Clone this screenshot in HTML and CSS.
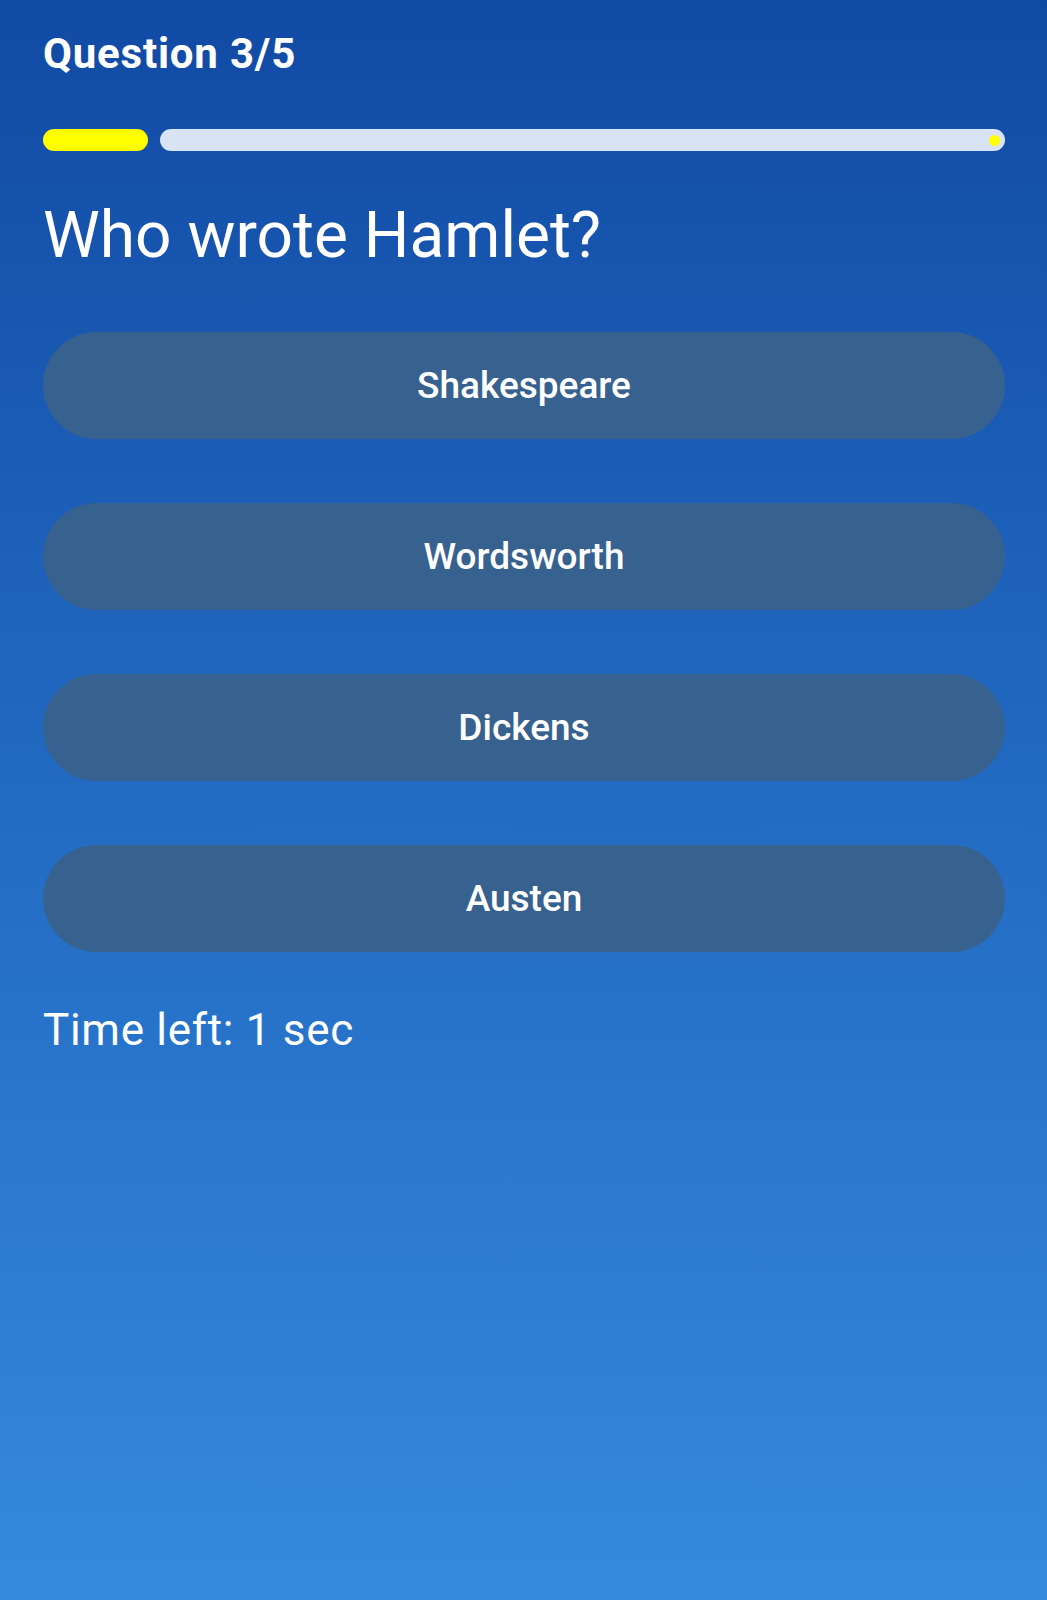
FILE: index.html
```html
<!DOCTYPE html>
<html>
<head>
<meta charset="utf-8">
<link rel="stylesheet" href="styles.css">
</head>
<body>
<main class="quiz">
  <h1 class="counter">Question 3/5</h1>
  <div class="progress">
    <div class="progress-fill"></div>
    <div class="progress-track"><span class="stop-dot"></span></div>
  </div>
  <h2 class="question">Who wrote Hamlet?</h2>
  <div class="answers">
    <button class="answer">Shakespeare</button>
    <button class="answer">Wordsworth</button>
    <button class="answer">Dickens</button>
    <button class="answer">Austen</button>
  </div>
  <p class="timer">Time left: 1 sec</p>
</main>
</body>
</html>
```
FILE: styles.css
```css
html, body {
  margin: 0;
  padding: 0;
}
body {
  width: 1047px;
  height: 1600px;
  background: linear-gradient(to bottom, #114aa4 0%, #1f64bd 40%, #358ade 100%);
  font-family: Roboto, "Noto Sans", "Liberation Sans", sans-serif;
  color: #ffffff;
  overflow: hidden;
}
.quiz {
  padding: 0 42px 0 43px;
  display: flex;
  flex-direction: column;
}
.counter {
  margin: 28px 0 0 0;
  font-size: 42px;
  font-weight: 700;
  line-height: 52px;
  letter-spacing: 0.8px;
}
.progress {
  margin-top: 49px;
  display: flex;
  gap: 12px;
  height: 22px;
}
.progress-fill {
  width: 105px;
  background: #ffff00;
  border-radius: 11px;
}
.progress-track {
  flex: 1;
  background: #d8e3f6;
  border-radius: 11px;
  display: flex;
  align-items: center;
  justify-content: flex-end;
  padding-right: 5px;
}
.stop-dot {
  width: 11px;
  height: 11px;
  border-radius: 50%;
  background: #ffff00;
}
.question {
  margin: 47px 0 0 0;
  font-size: 64px;
  font-weight: 400;
  line-height: 76px;
}
.answers {
  margin-top: 58px;
  display: flex;
  flex-direction: column;
  gap: 64px;
}
.answer {
  height: 107px;
  border: none;
  border-radius: 54px;
  background: #37618e;
  color: #ffffff;
  font-family: Roboto, "Noto Sans", "Liberation Sans", sans-serif;
  font-size: 37px;
  font-weight: 500;
  padding: 0;
}
.timer {
  margin: 52px 0 0 0;
  font-size: 44px;
  font-weight: 400;
  line-height: 52px;
  letter-spacing: 0.7px;
}
```
